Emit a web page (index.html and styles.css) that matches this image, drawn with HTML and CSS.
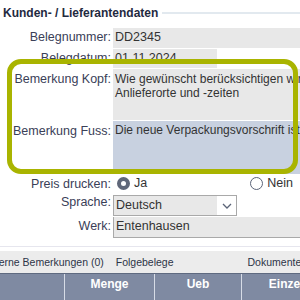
FILE: index.html
```html
<!DOCTYPE html>
<html lang="de">
<head>
  <meta charset="UTF-8">
  <title>Kunden- / Lieferantendaten</title>
  <link rel="stylesheet" href="styles.css">
</head>
<body>

<div class="page">
  <div class="section-title">
    <span>Kunden- / Lieferantendaten</span>
    <div class="rule"></div>
  </div>

  <div class="form">
    <label class="lbl">Belegnummer:</label>
    <div class="val">DD2345</div>

    <label class="lbl">Belegdatum:</label>
    <div class="val short">01.11.2024</div>

    <label class="lbl multi">Bemerkung Kopf:</label>
    <div class="val area">Wie gewünscht berücksichtigen wir Ihre<br>Anlieferorte und -zeiten</div>

    <label class="lbl multi">Bemerkung Fuss:</label>
    <div class="val area blue">Die neue Verpackungsvorschrift ist ab sofort gültig.</div>

    <label class="lbl">Preis drucken:</label>
    <div class="radios">
      <span class="radio checked"></span><span class="opt">Ja</span>
      <span class="radio"></span><span class="opt">Nein</span>
    </div>

    <label class="lbl">Sprache:</label>
    <div class="select">
      <span class="select-text">Deutsch</span>
      <span class="select-btn">
        <svg width="10" height="6" viewBox="0 0 10 6"><path d="M1 1 L5 5 L9 1" fill="none" stroke="#5b6478" stroke-width="1.3"/></svg>
      </span>
    </div>

    <label class="lbl">Werk:</label>
    <div class="val boxed">Entenhausen</div>
  </div>

  <div class="highlight"></div>

  <div class="divider"></div>

  <div class="tabs">
    <span class="tab first">Interne Bemerkungen (0)</span>
    <span class="tab">Folgebelege</span>
    <span class="tab last">Dokumente</span>
  </div>

  <div class="grid-head">
    <div class="col c1"></div>
    <div class="col c2">Menge</div>
    <div class="col c3">Ueb</div>
    <div class="col c4">Einzelpreis</div>
  </div>
</div>

</body>
</html>
```

FILE: styles.css
```css
* { box-sizing: border-box; }
html, body {
  margin: 0;
  overflow: hidden;
}
body {
  font-family: 'Liberation Sans', Arial, sans-serif;
  font-size: 12.5px;
  color: #333;
  background: #fff;
}
.page {
  position: relative;
  width: 360px;
}
.section-title {
  display: flex;
  align-items: center;
  padding: 6px 0 0 3px;
  font-size: 12px;
  font-weight: bold;
  color: #1f2a40;
  line-height: 14px;
}
.section-title .rule {
  flex: 1;
  height: 2px;
  margin-left: 4px;
  background: #e2e9ef;
}
.form {
  display: grid;
  grid-template-columns: 113px 1fr;
  row-gap: 1px;
  margin-top: 8px;
}
.lbl {
  text-align: right;
  padding: 2px 2px 0 0;
  color: #3a4057;
  line-height: 15px;
}
.val {
  background: #e8e8e8;
  padding: 2px 2px 0;
  height: 20px;
  line-height: 15px;
  white-space: nowrap;
  overflow: hidden;
}
.val.short { width: 104px; height: 19px; }
.val.area {
  height: 51px;
  padding-top: 3px;
  font-size: 12px;
  line-height: 14px;
}
.val.blue {
  background: #c8d1e0;
  height: 53px;
  padding-top: 2px;
}
.lbl.multi { padding-top: 3px; }
.radios {
  display: flex;
  align-items: center;
  height: 16px;
  padding-left: 4px;
}
.radio {
  width: 13px;
  height: 13px;
  border-radius: 50%;
  border: 1px solid #5b6478;
  background: #fff;
  margin-right: 4px;
}
.radio.checked {
  border: 4px solid #5f6779;
}
.opt { margin-right: 103px; }
.select {
  display: flex;
  width: 124px;
  height: 21px;
  margin-top: 2px;
  border: 1px solid #a9a9a9;
  background: #e8e8e8;
}
.select-text {
  flex: 1;
  padding: 2px 2px 0;
  line-height: 15px;
}
.select-btn {
  width: 19px;
  background: #fff;
  display: flex;
  align-items: center;
  justify-content: center;
}
.val.boxed {
  border: 1px solid #a9a9a9;
  border-top: none;
  border-right: none;
  height: 21px;
  padding-top: 2px;
}
.highlight {
  position: absolute;
  left: 7px;
  top: 59px;
  width: 291px;
  height: 115px;
  border: 5px solid #a9b400;
  border-radius: 14px;
}
.divider {
  height: 1px;
  margin-top: 8px;
  background: #e6e6ee;
}
.tabs {
  display: flex;
  align-items: center;
  height: 22px;
  margin-top: 4px;
  margin-left: -13px;
  background: #ececec;
  font-size: 10.5px;
  color: #2c3447;
}
.tab { margin-right: 12px; }
.tab.last { margin-left: 62px; }
.grid-head {
  display: flex;
  height: 30px;
  background: #7f8aa2;
  border-top: 1px solid #5f6a80;
  color: #fff;
  font-weight: bold;
  font-size: 12px;
}
.col {
  padding-top: 3px;
  text-align: center;
  border-left: 1px solid #d7dce6;
}
.c1 { width: 64px; border-left: none; }
.c2 { width: 90px; }
.c3 { width: 87px; }
.c4 { width: 118px; }
```
